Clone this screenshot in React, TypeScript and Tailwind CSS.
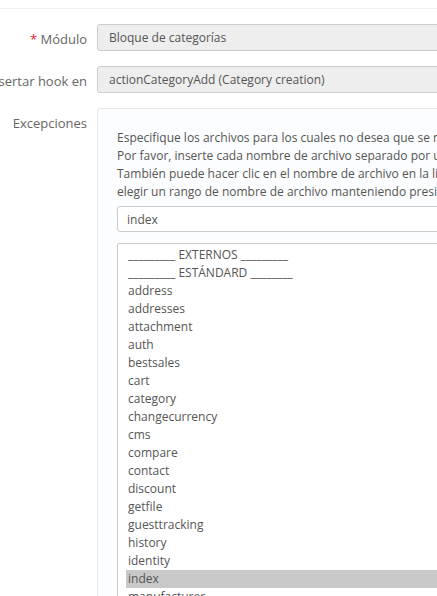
import React, { useState } from "react";

const files = [
  "_________ EXTERNOS _________",
  "_________ ESTÁNDARD ________",
  "address",
  "addresses",
  "attachment",
  "auth",
  "bestsales",
  "cart",
  "category",
  "changecurrency",
  "cms",
  "compare",
  "contact",
  "discount",
  "getfile",
  "guesttracking",
  "history",
  "identity",
  "index",
  "manufacturer",
  "myaccount",
];

const FormRow: React.FC<{ label: React.ReactNode; children: React.ReactNode }> = ({ label, children }) => (
  <div className="flex gap-[10px]">
    <div className="w-[87px] shrink-0 flex justify-end whitespace-nowrap pt-[6px] text-[13px] leading-[18px] text-[#666]">
      {label}
    </div>
    <div className="w-[560px] shrink-0">{children}</div>
  </div>
);

export default function App() {
  const [exceptions, setExceptions] = useState("index");
  const [selected, setSelected] = useState("index");

  return (
    <div className="w-[437px] h-[596px] overflow-hidden bg-white text-[12px] text-[#555]" style={{ fontFamily: '"Open Sans", sans-serif' }}>
      <div className="h-[9px] border-b border-[#eee]" />

      <div className="flex flex-col gap-[15px] pt-[15px]">
        {/* Module */}
        <FormRow
          label={
            <span>
              <span className="text-[#e3222f]">*</span> Módulo
            </span>
          }
        >
          <div className="h-[27px] flex items-center px-[11px] bg-[#eee] border border-[#ccc] rounded-[3px] text-[12px] text-[#555]">
            Bloque de categorías
          </div>
        </FormRow>

        {/* Hook */}
        <FormRow label="Insertar hook en">
          <div className="h-[27px] flex items-center px-[11px] bg-[#eee] border border-[#ccc] rounded-[3px] text-[12px] text-[#555]">
            actionCategoryAdd (Category creation)
          </div>
        </FormRow>

        {/* Exceptions */}
        <FormRow label="Excepciones">
          <div className="border border-[#e6e6e6] rounded-[3px] bg-[#fcfdfe] pt-[20px] pl-[19px] pb-[20px]">
            <div className="whitespace-nowrap text-[12px] leading-[18px] text-[#555]">
              <p>Especifique los archivos para los cuales no desea que se muestre el módulo.</p>
              <p>Por favor, inserte cada nombre de archivo separado por una coma (",").</p>
              <p>También puede hacer clic en el nombre de archivo en la lista para agregarlo al campo.</p>
              <p>elegir un rango de nombre de archivo manteniendo presionada la tecla SHIFT.</p>
            </div>
            <input
              value={exceptions}
              onChange={(e) => setExceptions(e.target.value)}
              className="mt-[5px] block w-[500px] h-[26px] px-[9px] bg-white border border-[#ccc] rounded-[3px] text-[12px] text-[#555] outline-none"
            />
            <div className="mt-[11px] w-[500px] border border-[#ccc] rounded-[2px] bg-white pt-[2px] pl-[8px] text-[12px] leading-[18px] text-[#555]">
              {files.map((f) => (
                <div
                  key={f}
                  onClick={() => setSelected(f)}
                  className={`h-[18px] pl-[2px] whitespace-nowrap cursor-pointer ${selected === f ? "bg-[#c8c8c8]" : ""}`}
                >
                  {f}
                </div>
              ))}
            </div>
          </div>
        </FormRow>
      </div>
    </div>
  );
}
